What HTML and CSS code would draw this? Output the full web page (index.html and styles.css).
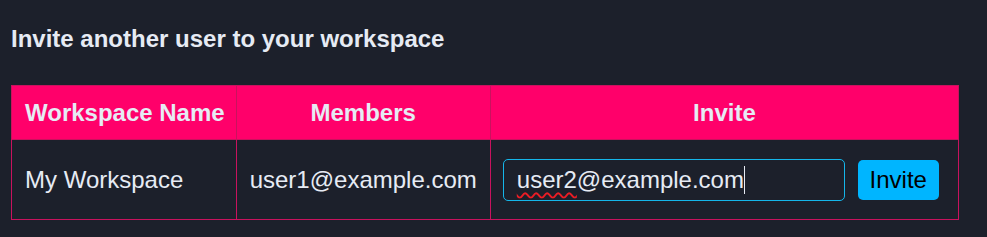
FILE: index.html
```html
<!DOCTYPE html>
<html lang="en">
<head>
<meta charset="utf-8">
<title>Invite user</title>
<meta name="viewport" content="width=device-width, initial-scale=1">
<link rel="stylesheet" href="styles.css">
</head>
<body>

<div class="page">
	<h3>Invite another user to your workspace</h3>

	<table class="workspaces">
		<thead>
			<tr>
				<th class="col-name">Workspace Name</th>
				<th class="col-members">Members</th>
				<th class="col-invite">Invite</th>
			</tr>
		</thead>
		<tbody>
			<tr>
				<td>My Workspace</td>
				<td>user1@example.com</td>
				<td class="invite-cell">
					<div class="invite-row">
						<div class="email-box"><span class="typo">user2</span>@example.com<span class="caret"></span></div>
						<button type="button" class="invite-btn">Invite</button>
					</div>
				</td>
			</tr>
		</tbody>
	</table>
</div><!-- page -->

</body>
</html>
```

FILE: styles.css
```css
body {
	margin: 0; padding: 0;
	background: #1c202b;
	color: #e6ebf4;
	font-family: "Liberation Sans", Arial, sans-serif;
}

.page {
	padding: 25px 11px;
}

h3 {
	margin: 0 0 32px;
	font-size: 24px;
	font-weight: bold;
	line-height: 28px;
}

table.workspaces {
	border-collapse: collapse;
	width: 948px;
	font-size: 24px;
}

	.workspaces th,
	.workspaces td {
		border: 1px solid #c9125e;
		padding: 0 13px;
		white-space: nowrap;
	}

	.workspaces th {
		background: #ff006a;
		height: 53px;
		text-align: center;
		font-weight: bold;
	}

	.workspaces th.col-name {
		width: 198px;
		padding-right: 11px;
	}

	.workspaces th.col-members {
		width: 227px;
	}

	.workspaces td {
		height: 79px;
		text-align: left;
	}

	.workspaces td.invite-cell {
		padding-left: 12px;
	}

.invite-row {
	display: flex;
	align-items: center;
	gap: 13px;
}

.email-box {
	box-sizing: border-box;
	width: 342px;
	height: 42px;
	line-height: 40px;
	border: 1px solid #15b6ea;
	border-radius: 5px;
	padding: 0 13px;
	white-space: nowrap;
}

	.email-box .typo {
		text-decoration: underline wavy #ec1c24;
		text-decoration-thickness: 1.5px;
		text-underline-offset: 4px;
	}

	.email-box .caret {
		display: inline-block;
		width: 1px;
		height: 28px;
		background: #e6ebf4;
		vertical-align: -6px;
	}

.invite-btn {
	border: none;
	background: #00b5ff;
	color: #000;
	font-family: inherit;
	font-size: 24px;
	height: 40px;
	width: 81px;
	padding: 0;
	border-radius: 5px;
}
```
